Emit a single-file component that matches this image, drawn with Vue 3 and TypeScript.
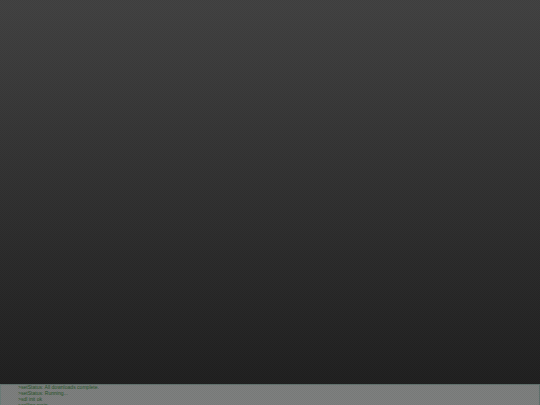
<script setup lang="ts">
const lines: string[] = [
  '>setStatus: All downloads complete.',
  '>setStatus: Running...',
  '>sdl init ok',
  '>calling main',
]
</script>

<template>
  <div class="page">
    <div class="stage"></div>
    <div class="console">
      <div class="log">
        <div v-for="line in lines" :key="line" class="line">{{ line }}</div>
      </div>
    </div>
  </div>
</template>

<style>
html, body { margin: 0; padding: 0; background: #1e1e1e; overflow: hidden; }
</style>

<style scoped>
.page {
  width: 540px;
  height: 405px;
  display: flex;
  flex-direction: column;
  overflow: hidden;
}
.stage {
  flex: 0 0 384px;
  background:
    repeating-conic-gradient(rgba(255, 255, 255, 0.015) 0 25%, rgba(0, 0, 0, 0.025) 0 50%) 0 0 / 2px 2px,
    linear-gradient(#404040, #1f1f1f);
}
.console {
  flex: 1;
  min-height: 0;
  overflow: hidden;
  box-sizing: border-box;
  padding: 0 16px 0 17px;
  border: 1px solid #5f6f6b;
  border-bottom: 0;
  border-left-color: #6a7a76;
  background:
    repeating-conic-gradient(rgba(255, 255, 255, 0.025) 0 25%, rgba(0, 0, 0, 0.03) 0 50%) 0 0 / 2px 2px,
    #7b7d7c;
}
.log {
  margin-top: -1px;
}
.line {
  font-family: "Liberation Sans", Arial, sans-serif;
  font-size: 5.05px;
  line-height: 6px;
  color: #265228;
  white-space: nowrap;
}
</style>
